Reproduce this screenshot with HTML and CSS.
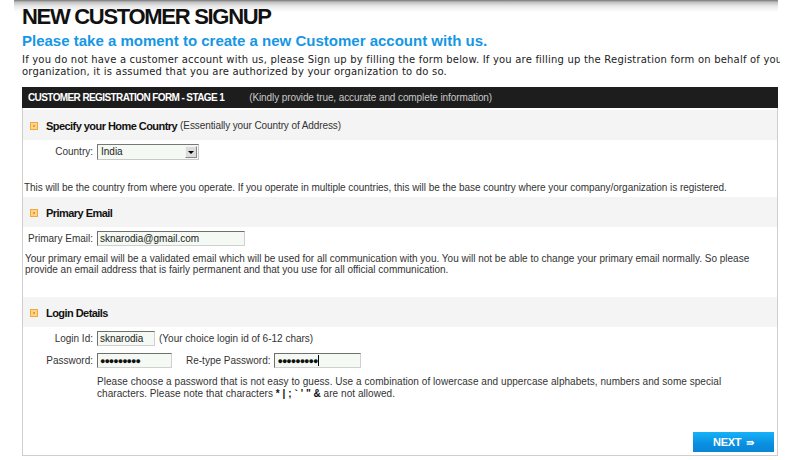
FILE: index.html
```html
<!DOCTYPE html>
<html>
<head>
<meta charset="utf-8">
<title>New Customer Signup</title>
<link rel="stylesheet" href="styles.css">
</head>
<body>
<div class="page">
  <h1 class="title">NEW CUSTOMER SIGNUP</h1>
  <h2 class="subtitle">Please take a moment to create a new Customer account with us.</h2>
  <p class="intro">If you do not have a customer account with us, please Sign up by filling the form below. If you are filling up the Registration form on behalf of your<br>organization, it is assumed that you are authorized by your organization to do so.</p>

  <div class="form">
    <div class="form-head"><b>CUSTOMER REGISTRATION FORM - STAGE 1</b><span>(Kindly provide true, accurate and complete information)</span></div>

    <div class="sec-head first"><i class="bullet"></i><b>Specify your Home Country</b><span class="sub">(Essentially your Country of Address)</span></div>
    <div class="row row-country">
      <label class="lbl">Country:</label>
      <div class="select"><span>India</span><i class="arrow"></i></div>
    </div>
    <p class="note note1">This will be the country from where you operate. If you operate in multiple countries, this will be the base country where your company/organization is registered.</p>

    <div class="sec-head"><i class="bullet"></i><b>Primary Email</b></div>
    <div class="row row-email">
      <label class="lbl">Primary Email:</label>
      <div class="field f-email">sknarodia@gmail.com</div>
    </div>
    <p class="note note2">Your primary email will be a validated email which will be used for all communication with you. You will not be able to change your primary email normally. So please<br>provide an email address that is fairly permanent and that you use for all official communication.</p>

    <div class="sec-head sec-login"><i class="bullet"></i><b>Login Details</b></div>
    <div class="row row-login">
      <label class="lbl">Login Id:</label>
      <div class="field f-login">sknarodia</div>
      <span class="hint">(Your choice login id of 6-12 chars)</span>
    </div>
    <div class="row row-pass">
      <label class="lbl">Password:</label>
      <div class="field f-pass dots">●●●●●●●●●</div>
      <label class="lbl2">Re-type Password:</label>
      <div class="field f-pass2 dots">●●●●●●●●●<i class="caret"></i></div>
    </div>
    <p class="help">Please choose a password that is not easy to guess. Use a combination of lowercase and uppercase alphabets, numbers and some special<br>characters. Please note that characters <b>* | ; ` ' "  &amp;</b> are not allowed.</p>

    <div class="actions"><button class="next">NEXT <span class="arr">⇛</span></button></div>
  </div>
</div>
</body>
</html>
```
FILE: styles.css
```css
body {
  margin: 0;
  background: #fff;
  font-family: "Liberation Sans", Arial, sans-serif;
  color: #333;
}

.page {
  width: 780px;
  box-sizing: border-box;
  padding-left: 22px;
  overflow: hidden;
  background: linear-gradient(#767676, #bdbdbd 2px, #e8e8e8 6px, #fff 12px) no-repeat 14px 0 / 764px 12px;
}

.title {
  margin: 0;
  padding-top: 5px;
  font: bold 22px/24px "Liberation Sans", Arial, sans-serif;
  letter-spacing: -1.3px;
  color: #111;
}

.subtitle {
  margin: 3px 0 0;
  font: bold 15px/18px "Liberation Sans", Arial, sans-serif;
  color: #1597e5;
}

.intro {
  margin: 4px 0 0;
  font: 10px/12px "DejaVu Sans", Verdana, sans-serif;
  letter-spacing: 0.2px;
  white-space: nowrap;
  color: #222;
}

.form {
  margin-top: 9px;
  width: 756px;
  box-sizing: border-box;
  border: 1px solid #cfcfcf;
  border-top: 0;
  font-size: 10px;
  line-height: 12px;
  color: #333;
}

.form-head {
  height: 21px;
  margin: 0 -1px;
  padding-left: 6px;
  display: flex;
  align-items: center;
  background: #1d1d1d;
  color: #fff;
}
.form-head b {
  letter-spacing: -0.6px;
  margin-right: 25px;
}
.form-head span {
  color: #c8c8c8;
  letter-spacing: -0.1px;
}

.sec-head {
  height: 30px;
  box-sizing: border-box;
  padding: 1px 0 0 7px;
  display: flex;
  align-items: center;
  background: #f4f4f4;
  color: #111;
}
.sec-head.first { margin-top: 2px; }
.sec-head b {
  font-size: 11px;
  letter-spacing: -0.55px;
  margin-left: 8px;
}
.sec-head .sub {
  margin-left: 3px;
  letter-spacing: -0.1px;
  color: #333;
}

.bullet {
  width: 8px;
  height: 8px;
  box-sizing: border-box;
  background: #fbd38c;
  border: 1px solid #f2a93a;
  position: relative;
}
.bullet::after {
  content: "";
  position: absolute;
  left: 2px;
  top: 2px;
  width: 2px;
  height: 2px;
  background: #ee9a2a;
}

.row {
  display: flex;
  align-items: center;
}
.lbl {
  width: 70px;
  text-align: right;
  margin-right: 4px;
  color: #333;
}
.row-country { margin-top: 4px; }
.row-email { margin-top: 4px; }
.row-login { margin-top: 4px; }
.row-pass { margin-top: 7px; }

.select {
  width: 102px;
  height: 16px;
  box-sizing: border-box;
  border: 1px solid;
  border-color: #777 #c8c8c8 #c8c8c8 #777;
  background: #f4faf3;
  display: flex;
  align-items: center;
  justify-content: space-between;
  padding-left: 3px;
  color: #222;
}
.arrow {
  width: 12px;
  height: 12px;
  margin-right: 1px;
  box-sizing: border-box;
  background: #dcdcdc;
  border: 1px solid;
  border-color: #f4f4f4 #888 #888 #f4f4f4;
  position: relative;
}
.arrow::after {
  content: "";
  position: absolute;
  left: 2px;
  top: 4px;
  border-left: 3px solid transparent;
  border-right: 3px solid transparent;
  border-top: 3px solid #000;
}

.field {
  height: 15px;
  box-sizing: border-box;
  border: 1px solid;
  border-color: #6f6f6f #d0d0d0 #d0d0d0 #6f6f6f;
  background: #f4faf3;
  padding-left: 2px;
  display: flex;
  align-items: center;
  color: #222;
  white-space: nowrap;
  overflow: hidden;
}
.f-email { width: 148px; }
.f-login { width: 58px; }
.f-pass { width: 75px; }
.f-pass2 { width: 87px; }
.dots {
  font-size: 9px;
  letter-spacing: -1px;
  color: #111;
}
.caret {
  width: 1px;
  height: 11px;
  background: #000;
  margin-left: 1px;
}

.hint {
  margin-left: 4px;
}
.lbl2 {
  margin: 0 4px 0 14px;
}

.note {
  margin: 0;
  padding-left: 1px;
  white-space: nowrap;
}
.note1 { margin-top: 22px; margin-bottom: 3px; letter-spacing: -0.04px; }
.note2 { margin-top: 7px; padding-left: 2px; line-height: 11px; }
.sec-login { margin-top: 22px; }

.help {
  margin: 8px 0 0 74px;
  font-size: 10px;
  line-height: 12px;
  letter-spacing: 0.05px;
  white-space: nowrap;
}
.help b { color: #111; }

.actions {
  display: flex;
  justify-content: flex-end;
  padding: 32px 3px 3px 0;
}
.next {
  width: 81px;
  height: 20px;
  border: 0;
  padding: 0;
  background: linear-gradient(#17b2f8, #0a8fe0 60%, #0a84d6);
  color: #fff;
  font: bold 11px "Liberation Sans", Arial, sans-serif;
  letter-spacing: -0.3px;
}
.next .arr {
  font-family: "DejaVu Sans", sans-serif;
  font-size: 10px;
  margin-left: 2px;
}
```
